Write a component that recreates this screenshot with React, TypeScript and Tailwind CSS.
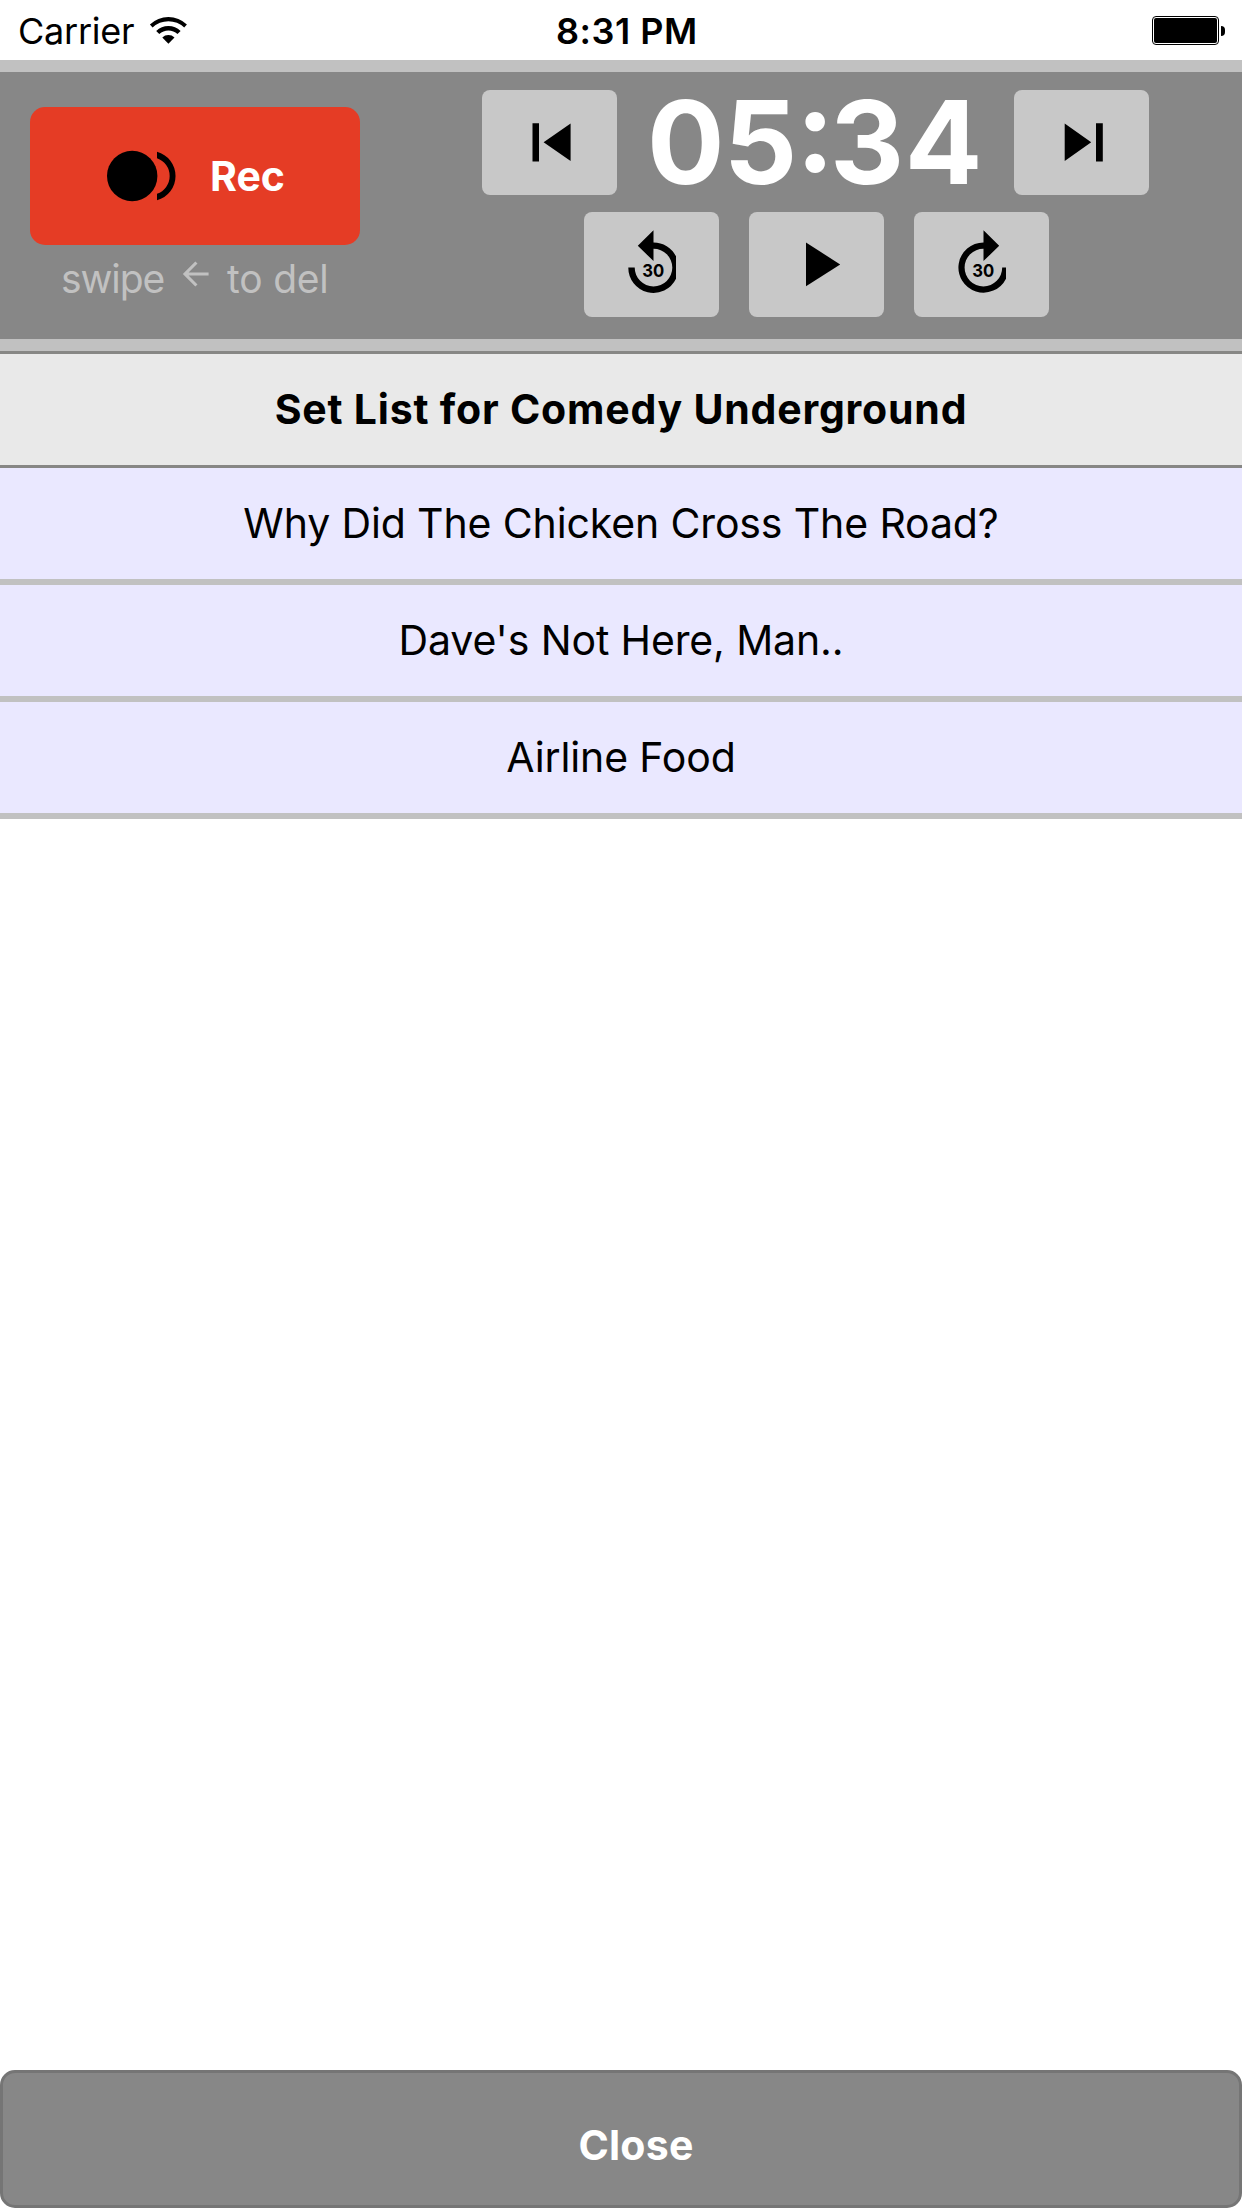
import React, { type ReactNode } from "react";

function WifiIcon() {
  return (
    <svg className="mb-[3px] ml-[14px] h-[30px] w-[40px]" viewBox="148 14 40 30">
      <path d="M149.9 23.4A26.8 26.8 0 0 1 186.9 23.4L184.2 26.6A22.6 22.6 0 0 0 152.6 26.6Z" />
      <path d="M156.2 29.9A17.8 17.8 0 0 1 180.6 29.9L177.5 33A13.5 13.5 0 0 0 159.3 33Z" />
      <path d="M162.3 36.4A8.8 8.8 0 0 1 174.5 36.4L168.4 42.8Z" />
    </svg>
  );
}

function Battery() {
  return (
    <div className="mb-[1px] mr-[17px] flex items-center gap-0.5">
      <div className="h-[29px] w-[67px] rounded-[4px] border border-black bg-white p-px">
        <div className="h-full w-full rounded-[2px] bg-black" />
      </div>
      <div className="h-[10px] w-[4px] rounded-r-[4px] bg-black" />
    </div>
  );
}

function StatusBar() {
  return (
    <div className="flex h-[60px] items-center pt-[2px] text-[36px] leading-[60px] text-black">
      <div className="flex w-[556px] items-center pl-[18px]">
        <span className="tracking-[-0.24px]">Carrier</span>
        <WifiIcon />
      </div>
      <span className="flex-1 font-semibold tracking-[0.51px]">8:31 PM</span>
      <Battery />
    </div>
  );
}

function ControlButton({ label, children }: { label: string; children: ReactNode }) {
  return (
    <button aria-label={label} className="h-[105px] w-[135px] shrink-0 rounded-[8px] bg-[#c8c8c8]">
      <svg className="block h-[105px] w-[135px]" viewBox="0 0 135 105">
        {children}
      </svg>
    </button>
  );
}

function Seconds() {
  return (
    <text x="69.2" y="65.3" textAnchor="middle" className="font-['Inter'] text-[18px] font-bold" textLength="22" lengthAdjust="spacingAndGlyphs">
      30
    </text>
  );
}

function Recorder() {
  return (
    <div className="flex h-[291px] border-y-[12px] border-[#c1c1c1] bg-[#878787]">
      <div className="ml-[30px] w-[330px] pt-[35px]">
        <button className="flex h-[138px] w-full items-center rounded-[15px] bg-[#e53c25] pl-[77px]">
          <svg className="h-[52px] w-[70px]" viewBox="107 150.5 70 52">
            <circle cx="132.2" cy="176.5" r="25.2" />
            <path d="M157 152.2A25.2 25.2 0 0 1 157 200.8V194.2A18.7 18.7 0 0 0 157 158.8Z" />
          </svg>
          <span className="ml-[33px] text-[41px] font-bold leading-[50px] text-white">Rec</span>
        </button>
        <div className="flex h-[66px] items-center pl-[31px] pt-[2px] text-[39px] leading-[66px] text-[#c1c1c1]">
          <span className="w-[119px] tracking-[-1.08px]">swipe</span>
          <svg className="mb-[11px] h-[28px] w-[30px]" viewBox="180 259.3 30 28" fill="none" stroke="currentColor" strokeWidth="3.1">
            <path d="M208.6 273.3H185M196.4 261.8L185 273.3L196.4 284.8" />
          </svg>
          <span className="ml-[17px] tracking-[-0.2px]">to del</span>
        </div>
      </div>
      <div className="ml-[122px] w-[667px] pt-[18px]">
        <div className="flex h-[105px]">
          <ControlButton label="Previous">
            <path d="M50.5 33.2H57V71.5H50.5ZM61.6 52.3L88.6 33.6V71Z" />
          </ControlButton>
          <div className="flex w-[397px] pl-[30px] text-[115px] font-bold leading-[105px] text-white">
            <span className="w-[149px] tracking-[-0.8px]">05</span>
            <span className="relative -top-[12px] w-[34px]">:</span>
            <span className="tracking-[0.5px]">34</span>
          </div>
          <ControlButton label="Next">
            <path d="M50.7 33.6L77.2 52.3L50.7 71ZM82 33.2H88.8V71.5H82Z" />
          </ControlButton>
        </div>
        <div className="mt-[17px] flex gap-[30px] pl-[102px]">
          <ControlButton label="Back 30 seconds">
            <path d="M53.8 33.7L69.5 18.3V30.4A25.1 25.1 0 0 1 92 44.3V66.7A25.1 25.1 0 0 1 44.3 55.5H50.7A18.8 18.8 0 1 0 69.5 36.8V49.1Z" />
            <Seconds />
          </ControlButton>
          <ControlButton label="Play">
            <path d="M57 30.6L91.2 52.4L57 74.2Z" />
          </ControlButton>
          <ControlButton label="Forward 30 seconds">
            <path d="M85.2 33.7L69.5 18.3V30.4A25.1 25.1 0 1 0 92 66.7V55.5H88.2A18.8 18.8 0 1 1 69.5 36.8V49.1Z" />
            <Seconds />
          </ControlButton>
        </div>
      </div>
    </div>
  );
}

const bits = ["Why Did The Chicken Cross The Road?", "Dave's Not Here, Man..", "Airline Food"];

export default function App() {
  return (
    <div className="flex h-[2208px] w-[1242px] flex-col bg-white font-['Inter',sans-serif]">
      <StatusBar />
      <Recorder />
      <h1 className="flex h-[117px] items-center justify-center border-y-[3px] border-[#878785] bg-[#e9e9e9] text-[41px] font-bold tracking-[0.79px] text-black">
        Set List for Comedy Underground
      </h1>
      <ul className="flex-1">
        {bits.map((bit) => (
          <li
            key={bit}
            className="flex h-[117px] items-center justify-center border-b-[6px] border-[#c1c1c1] bg-[#eae8ff] text-[41px] tracking-[-0.13px] text-black"
          >
            {bit}
          </li>
        ))}
      </ul>
      <button className="flex h-[138px] items-center justify-center rounded-[15px] border-[3px] border-[#757575] bg-[#878787] pl-[30px] pt-[14px] text-[41px] font-bold tracking-[0.24px] text-white">
        Close
      </button>
    </div>
  );
}
